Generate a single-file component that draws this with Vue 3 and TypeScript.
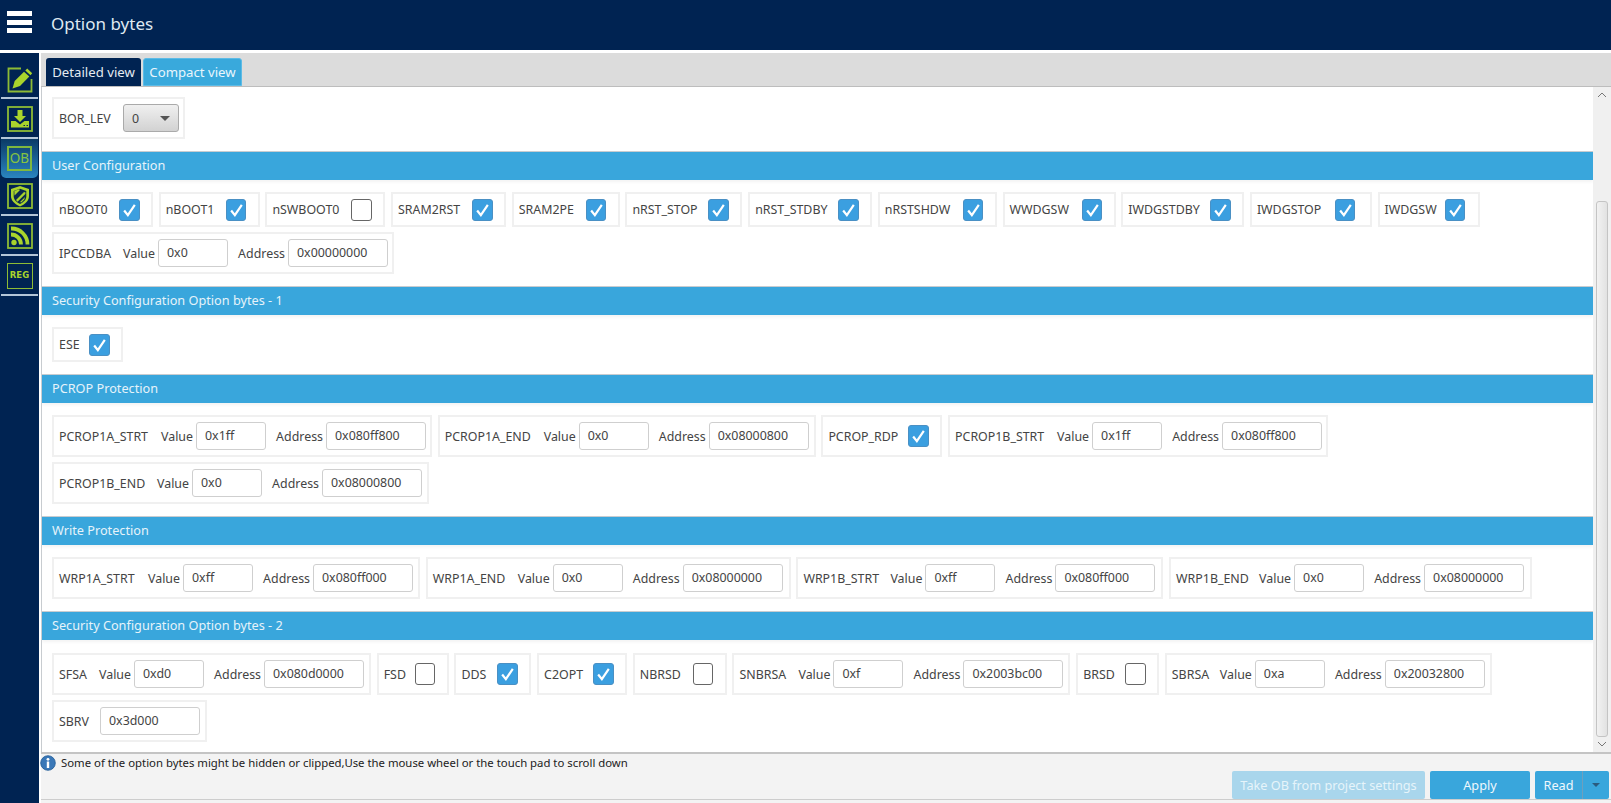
<script setup lang="ts">
interface Item {
  name: string
  w: number
  pr?: number
  check?: boolean
  value?: string
  address?: string
  solo?: string
}
interface Section {
  title: string
  items: Item[]
}

const sections: Section[] = [
  {
    title: 'User Configuration',
    items: [
      { name: 'nBOOT0', w: 101, check: true },
      { name: 'nBOOT1', w: 101, check: true },
      { name: 'nSWBOOT0', w: 120, check: false },
      { name: 'SRAM2RST', w: 115, check: true },
      { name: 'SRAM2PE', w: 108, check: true },
      { name: 'nRST_STOP', w: 117, check: true },
      { name: 'nRST_STDBY', w: 124, check: true },
      { name: 'nRSTSHDW', w: 119, check: true },
      { name: 'WWDGSW', w: 113, check: true },
      { name: 'IWDGSTDBY', w: 123, check: true },
      { name: 'IWDGSTOP', w: 122, pr: 7, check: true },
      { name: 'IWDGSW', w: 102, pr: 5, check: true },
      { name: 'IPCCDBA', w: 342, value: '0x0', address: '0x00000000' }
    ]
  },
  {
    title: 'Security Configuration Option bytes - 1',
    items: [{ name: 'ESE', w: 71, check: true }]
  },
  {
    title: 'PCROP Protection',
    items: [
      { name: 'PCROP1A_STRT', w: 380, value: '0x1ff', address: '0x080ff800' },
      { name: 'PCROP1A_END', w: 378, pr: 5, value: '0x0', address: '0x08000800' },
      { name: 'PCROP_RDP', w: 121, check: true },
      { name: 'PCROP1B_STRT', w: 380, value: '0x1ff', address: '0x080ff800' },
      { name: 'PCROP1B_END', w: 377, pr: 5, value: '0x0', address: '0x08000800' }
    ]
  },
  {
    title: 'Write Protection',
    items: [
      { name: 'WRP1A_STRT', w: 368, pr: 5, value: '0xff', address: '0x080ff000' },
      { name: 'WRP1A_END', w: 365, pr: 6, value: '0x0', address: '0x08000000' },
      { name: 'WRP1B_STRT', w: 367, pr: 6, value: '0xff', address: '0x080ff000' },
      { name: 'WRP1B_END', w: 363, pr: 6, value: '0x0', address: '0x08000000' }
    ]
  },
  {
    title: 'Security Configuration Option bytes - 2',
    items: [
      { name: 'SFSA', w: 319, pr: 5, value: '0xd0', address: '0x080d0000' },
      { name: 'FSD', w: 72, check: false },
      { name: 'DDS', w: 77, check: true },
      { name: 'C2OPT', w: 90, check: true },
      { name: 'NBRSD', w: 94, check: false },
      { name: 'SNBRSA', w: 338, pr: 5, value: '0xf', address: '0x2003bc00' },
      { name: 'BRSD', w: 83, check: false },
      { name: 'SBRSA', w: 327, pr: 5, value: '0xa', address: '0x20032800' },
      { name: 'SBRV', w: 155, pr: 5, solo: '0x3d000' }
    ]
  }
]
</script>

<template>
  <div class="app">
    <header class="topbar">
      <div class="burger"><span></span><span></span><span></span></div>
      <h1 class="title">Option bytes</h1>
    </header>
    <div class="body">
      <nav class="side">
        <div class="side-item">
          <svg class="ico" viewBox="0 0 26 26">
            <path d="M14 1.500H1.500v23h23V12" fill="none" stroke="#8dbb35" stroke-width="1.800" />
            <path d="M5.500 21.500l2.200-7.500L17 4.800l5.300 4.800-9.300 9.500z" fill="#a9d42c" />
            <path d="M18.300 3.500l1.900-1.900 5 4.700-1.700 1.900z" fill="#a9d42c" />
          </svg>
        </div>
        <div class="side-item">
          <svg class="ico" viewBox="0 0 26 26">
            <rect x="1" y="1" width="24" height="24" fill="none" stroke="#8dbb35" stroke-width="1.800" />
            <path d="M10.500 4h5v6h3.500L13 16 7 10h3.500z" fill="#a9d42c" />
            <path d="M4 15h4.500l4.500 3.500 4.500-3.500H22v6.500H4z" fill="#a9d42c" />
            <path d="M16.500 19.500h1.500M19.500 19.500H21" stroke="#0a2a4e" stroke-width="1.200" />
          </svg>
        </div>
        <div class="side-item active">
          <span class="ob">OB</span>
        </div>
        <div class="side-item">
          <svg class="ico" viewBox="0 0 26 26">
            <rect x="1" y="1" width="24" height="24" fill="none" stroke="#8dbb35" stroke-width="1.800" />
            <path d="M13 3l9 3v7c0 4.500-3.500 8.200-9 10.500C7.500 21.200 4 17.500 4 13V6z" fill="#a9d42c" />
            <path d="M13 5.800l6.300 2.100v5.300c0 3.200-2.500 6-6.300 7.700-3.800-1.700-6.300-4.500-6.300-7.700V7.900z" fill="#0a2a4e" />
            <path d="M7.500 12.500L13 7l-1-.7-4.700 1.800zM9 17l8-8 1.500.5-.2 1.500-7.800 7.800zM13 19l5-5-.7 2.500-3 3z" fill="#a9d42c" />
          </svg>
        </div>
        <div class="side-item">
          <svg class="ico" viewBox="0 0 26 26">
            <rect x="1" y="1" width="24" height="24" fill="none" stroke="#8dbb35" stroke-width="1.800" />
            <circle cx="7" cy="19.500" r="2.700" fill="#a9d42c" />
            <path d="M4 11.500a10 10 0 0 1 10 10M4 5.500a16 16 0 0 1 16.500 16" fill="none" stroke="#a9d42c" stroke-width="3.800" />
          </svg>
        </div>
        <div class="side-item">
          <span class="reg">REG</span>
        </div>
      </nav>
      <main class="main">
        <div class="tabs">
          <div class="tab tab-dark">Detailed view</div>
          <div class="tab tab-blue">Compact view</div>
        </div>
        <div class="scroller">
          <div class="content">
            <div class="top-group">
              <div class="card tall card-bor">
                <span class="lab grow">BOR_LEV</span>
                <div class="select"><span>0</span><i class="caret"></i></div>
              </div>
            </div>
            <section v-for="s in sections" :key="s.title" class="section">
              <div class="sec-head">{{ s.title }}</div>
              <div class="sec-body">
                <div
                  v-for="it in s.items"
                  :key="it.name"
                  class="card"
                  :class="{ tall: it.check === undefined }"
                  :style="{ width: it.w + 'px', paddingRight: (it.pr ?? 4) + 'px' }"
                >
                  <span class="lab grow">{{ it.name }}</span>
                  <template v-if="it.check !== undefined">
                    <span class="box" :class="{ on: it.check }">
                      <svg v-if="it.check" viewBox="0 0 20 20" class="tick">
                        <path d="M4.500 10.500l4 5L16 4.500" fill="none" stroke="#fff" stroke-width="2.400" />
                      </svg>
                    </span>
                  </template>
                  <template v-else-if="it.solo">
                    <span class="field wide">{{ it.solo }}</span>
                  </template>
                  <template v-else>
                    <span class="lab sub">Value</span>
                    <span class="field">{{ it.value }}</span>
                    <span class="lab sub2">Address</span>
                    <span class="field wide">{{ it.address }}</span>
                  </template>
                </div>
              </div>
            </section>
          </div>
          <div class="scrollbar">
            <svg class="arrow" viewBox="0 0 10 6"><path d="M1 5l4-4 4 4" fill="none" stroke="#777" stroke-width="1" /></svg>
            <div class="track"><div class="thumb"></div></div>
            <svg class="arrow" viewBox="0 0 10 6"><path d="M1 1l4 4 4-4" fill="none" stroke="#777" stroke-width="1" /></svg>
          </div>
        </div>
        <div class="bottom">
          <div class="info">
            <svg class="info-ico" viewBox="0 0 16 16">
              <circle cx="8" cy="8" r="7.300" fill="#3a78b8" stroke="#1f5a96" stroke-width="0.800" />
              <circle cx="8" cy="4.300" r="1.400" fill="#fff" />
              <rect x="6.800" y="6.500" width="2.400" height="6.500" fill="#fff" />
            </svg>
            <span>Some of the option bytes might be hidden or clipped,Use the mouse wheel or the touch pad to scroll down</span>
          </div>
          <div class="actions">
            <button class="btn take">Take OB from project settings</button>
            <button class="btn apply">Apply</button>
            <div class="split">
              <button class="btn read">Read</button>
              <button class="btn more"><i class="caret light"></i></button>
            </div>
          </div>
        </div>
      </main>
    </div>
  </div>
</template>

<style>
html, body { margin: 0; padding: 0; background: #fff; overflow: hidden; }
</style>

<style scoped>
.app {
  width: 1611px;
  height: 803px;
  display: flex;
  flex-direction: column;
  font-family: "Noto Sans", "Open Sans", sans-serif;
  font-size: 12.4px;
  color: #444;
  background: #fff;
  overflow: hidden;
}
.topbar {
  height: 50px;
  flex: none;
  background: #002352;
  display: flex;
  align-items: center;
  box-sizing: border-box;
  padding-left: 7px;
}
.burger {
  width: 25px;
  height: 22px;
  display: flex;
  flex-direction: column;
  justify-content: space-between;
  margin-top: -6px;
}
.burger span { display: block; height: 5px; background: #fff; }
.title {
  margin: 0 0 4px 19px;
  font-size: 17px;
  font-weight: 400;
  color: #dfe9f1;
}
.body {
  flex: 1;
  min-height: 0;
  display: flex;
  margin-top: 3px;
}
.side {
  width: 39px;
  flex: none;
  background: #002352;
  padding-top: 6px;
  box-sizing: border-box;
}
.side-item {
  height: 40px;
  margin: 0 1px;
  box-sizing: border-box;
  display: flex;
  justify-content: center;
  padding-top: 7px;
  border-bottom: 2px solid #b4c6d8;
}
.side-item:first-child { padding-top: 8px; }
.side-item.active {
  border-bottom: none;
  border-radius: 0 0 5px 5px;
  background: linear-gradient(#0b3a66, #2a85c0);
  height: 39px;
  padding-top: 7px;
}
.side-item:nth-child(4) { height: 38px; padding-top: 5px; }
.ico { width: 26px; height: 26px; display: block; }
.ob {
  width: 25px;
  height: 25px;
  box-sizing: border-box;
  border: 2px solid #7fb83f;
  color: #86c440;
  font-size: 13.500px;
  line-height: 20px;
  text-align: center;
}
.reg {
  width: 26px;
  height: 26px;
  box-sizing: border-box;
  border: 1.500px solid #8dbb35;
  color: #a9d42c;
  font-size: 8.500px;
  font-weight: 700;
  line-height: 23px;
  text-align: center;
  font-family: "DejaVu Sans", sans-serif;
}
.main {
  flex: 1;
  min-width: 0;
  margin-left: 2px;
  display: flex;
  flex-direction: column;
  background: #f3f3f3;
}
.tabs {
  height: 34px;
  flex: none;
  box-sizing: border-box;
  background: #dcdcdc;
  border-bottom: 1px solid #bdbdbd;
  padding: 5px 0 0 5px;
  display: flex;
  gap: 2px;
}
.tab {
  height: 28px;
  box-sizing: border-box;
  border-radius: 3px 3px 0 0;
  font-size: 13.200px;
  line-height: 29px;
  text-align: center;
}
.tab-dark { width: 95px; background: #002352; color: #e4ebf1; }
.tab-blue { width: 99px; background: #39a9dc; color: #e9f6fc; border: 1px solid #5cbbe6; line-height: 27px; }
.scroller {
  height: 665px;
  flex: none;
  display: flex;
  background: #fff;
  border-bottom: 2px solid #c4c4c4;
}
.content {
  flex: 1;
  min-width: 0;
  overflow: hidden;
  border-left: 1px solid #c8ccd0;
}
.top-group {
  height: 65px;
  box-sizing: border-box;
  padding: 10px 10px 0;
  border-bottom: 1px solid #c8ccd0;
}
.card-bor { width: 133px; height: 42px; padding-right: 6px; }
.sec-head {
  height: 28px;
  line-height: 27px;
  background: #39a6dc;
  color: #e6f3fa;
  font-size: 12.700px;
  padding-left: 10px;
  box-sizing: border-box;
  box-shadow: 0 2px 3px rgba(0, 0, 0, 0.05);
}
.sec-body {
  padding: 12px 0 12px 10px;
  display: flex;
  flex-wrap: wrap;
  align-content: flex-start;
  gap: 5px 5.700px;
  border-bottom: 1px solid #c8ccd0;
}
.section:last-child .sec-body { border-bottom: none; padding-top: 13px; }
.card {
  min-height: 35px;
  box-sizing: border-box;
  border: 2px solid #f0f0f0;
  padding: 0 4px 0 5px;
  display: flex;
  align-items: center;
  background: #fff;
}
.card.tall { min-height: 42px; }
.lab { white-space: nowrap; color: #444; }
.grow { flex: 1; min-width: 0; }
.sub { width: 33px; margin-right: 3px; text-align: right; }
.sub2 { width: 47px; margin-left: 10px; margin-right: 3px; text-align: right; }
.field {
  width: 70px;
  height: 28px;
  box-sizing: border-box;
  border: 1px solid #cfcfcf;
  border-radius: 3px;
  padding: 0 8px;
  line-height: 26px;
  background: #fff;
  color: #444;
  flex: none;
}
.field.wide { width: 100px; }
.box {
  width: 20.500px;
  height: 22px;
  box-sizing: border-box;
  border-radius: 3px;
  border: 1px solid #666;
  background: #fff;
  margin-right: 7.500px;
  flex: none;
}
.box.on { background: #3b9fe0; border-color: #4a90c4; }
.tick { width: 18.500px; height: 20px; display: block; }
.select {
  width: 56px;
  height: 28px;
  flex: none;
  box-sizing: border-box;
  border: 1px solid #aaa;
  border-radius: 3px;
  background: linear-gradient(#f0f0f0, #d2d2d2);
  display: flex;
  align-items: center;
  justify-content: space-between;
  padding: 0 8px;
  color: #444;
}
.caret {
  display: block;
  width: 0;
  height: 0;
  border-left: 5px solid transparent;
  border-right: 5px solid transparent;
  border-top: 5px solid #555;
}
.caret.light {
  border-left-width: 4px;
  border-right-width: 4px;
  border-top-width: 4px;
  border-top-color: #2b5b7e;
  margin: 0 auto;
}
.scrollbar {
  width: 18px;
  flex: none;
  background: #f0f0f0;
  display: flex;
  flex-direction: column;
  align-items: center;
  justify-content: space-between;
  padding: 3px 0;
  box-sizing: border-box;
}
.arrow { width: 10px; height: 6px; flex: none; margin: 2px 0; }
.track {
  flex: 1;
  width: 100%;
  display: flex;
  flex-direction: column;
  justify-content: flex-end;
  margin-top: 4px;
  padding: 0 3px 2px;
  box-sizing: border-box;
}
.thumb {
  height: 534px;
  border: 1px solid #c4c4c4;
  border-radius: 3px;
  background: linear-gradient(90deg, #f2f2f2, #e2e2e2);
}
.bottom {
  flex: 1;
  min-height: 0;
  display: flex;
  flex-direction: column;
  background: #f3f3f3;
}
.info {
  height: 17px;
  display: flex;
  align-items: center;
  gap: 5px;
  color: #222;
  font-size: 11.350px;
  margin-left: -1px;
}
.info-ico { width: 16px; height: 16px; flex: none; }
.actions {
  height: 29px;
  box-sizing: border-box;
  border-bottom: 1px solid #cdcdcd;
  display: flex;
  justify-content: flex-end;
  gap: 5px;
  padding-right: 2px;
}
.btn {
  height: 28px;
  border: none;
  border-radius: 2px;
  font: inherit;
  font-size: 12.700px;
  color: #eef8fd;
  background: #39a6dc;
  padding: 0;
}
.take { width: 193px; background: #a9d6ec; color: #e6f4fa; }
.apply { width: 100px; }
.split { display: flex; }
.read { width: 48px; border-right: 1px solid #6e9fbd; border-radius: 2px 0 0 2px; }
.more { width: 26px; border-radius: 0 2px 2px 0; }
</style>
